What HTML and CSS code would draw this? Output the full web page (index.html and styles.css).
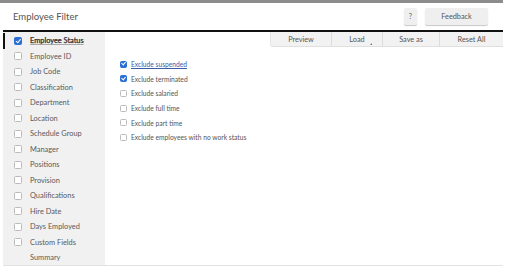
FILE: index.html
```html
<!DOCTYPE html>
<html>
<head>
<meta charset="utf-8">
<link rel="stylesheet" href="styles.css">
</head>
<body>
<div class="page">
  <div class="topbar"></div>
  <div class="header">
    <div class="title">Employee Filter</div>
    <div class="hbtns">
      <div class="btn help">?</div>
      <div class="btn feedback">Feedback</div>
    </div>
  </div>
  <div class="main">
    <div class="sidebar">
      <div class="item active"><span class="cb checked"></span><span class="label">Employee Status</span></div>
      <div class="item"><span class="cb"></span><span class="label">Employee ID</span></div>
      <div class="item"><span class="cb"></span><span class="label">Job Code</span></div>
      <div class="item"><span class="cb"></span><span class="label">Classification</span></div>
      <div class="item"><span class="cb"></span><span class="label">Department</span></div>
      <div class="item"><span class="cb"></span><span class="label">Location</span></div>
      <div class="item"><span class="cb"></span><span class="label">Schedule Group</span></div>
      <div class="item"><span class="cb"></span><span class="label">Manager</span></div>
      <div class="item"><span class="cb"></span><span class="label">Positions</span></div>
      <div class="item"><span class="cb"></span><span class="label">Provision</span></div>
      <div class="item"><span class="cb"></span><span class="label">Qualifications</span></div>
      <div class="item"><span class="cb"></span><span class="label">Hire Date</span></div>
      <div class="item"><span class="cb"></span><span class="label">Days Employed</span></div>
      <div class="item"><span class="cb"></span><span class="label">Custom Fields</span></div>
      <div class="item"><span class="cb hidden"></span><span class="label">Summary</span></div>
    </div>
    <div class="content">
      <div class="toolbar">
        <div class="tb t1">Preview</div>
        <div class="tb t2">Load<span class="caret"></span></div>
        <div class="tb t3">Save as</div>
        <div class="tb t4">Reset All</div>
      </div>
      <div class="options">
        <div class="opt"><span class="cb small checked"></span><span class="link">Exclude suspended</span></div>
        <div class="opt"><span class="cb small checked"></span><span>Exclude terminated</span></div>
        <div class="opt"><span class="cb small"></span><span>Exclude salaried</span></div>
        <div class="opt"><span class="cb small"></span><span>Exclude full time</span></div>
        <div class="opt"><span class="cb small"></span><span>Exclude part time</span></div>
        <div class="opt"><span class="cb small"></span><span>Exclude employees with no work status</span></div>
      </div>
    </div>
  </div>
</div>
</body>
</html>
```
FILE: styles.css
```css
html, body {
  margin: 0;
  padding: 0;
  background: #ffffff;
}
body {
  font-family: Lato, "Open Sans", sans-serif;
  color: #555;
}
.page {
  width: 503px;
}
.topbar {
  height: 3px;
  background: #8c8c8c;
}
.header {
  height: 27px;
  display: flex;
  align-items: center;
  justify-content: space-between;
  padding-left: 13px;
  padding-right: 15px;
  box-sizing: border-box;
}
.title {
  font-size: 9.5px;
  color: #555;
}
.hbtns {
  display: flex;
  gap: 8px;
  align-items: center;
}
.btn {
  height: 17px;
  background: #efefef;
  border-radius: 2px;
  box-shadow: 0 1px 1px #c8c8c8;
  font-size: 7.3px;
  color: #555;
  display: flex;
  align-items: center;
  justify-content: center;
}
.help {
  width: 13px;
}
.feedback {
  width: 63px;
}
.main {
  margin-left: 3px;
  border-top: 2px solid #111;
  display: flex;
  height: 233px;
  border-bottom: 1px solid #e2e2e2;
}
.sidebar {
  width: 102px;
  background: #f1f1f1;
  padding-top: 1px;
  box-sizing: border-box;
}
.item {
  height: 15.5px;
  display: flex;
  align-items: center;
  font-size: 7.4px;
  color: #5a5a5a;
  border-left: 2px solid transparent;
  padding-left: 9px;
}
.item.active {
  border-left-color: #111;
  color: #222;
}
.item.active .label {
  text-decoration: underline;
  text-decoration-color: #aaa;
  -webkit-text-stroke: 0.25px #333;
}
.cb {
  width: 6px;
  height: 6px;
  border: 1px solid #bbb;
  border-radius: 1.5px;
  background: #fff;
  margin-right: 8px;
  flex: none;
  position: relative;
}
.cb.hidden {
  visibility: hidden;
}
.cb.checked {
  background: #2b6fd6;
  border-color: #2b6fd6;
}
.cb.checked::after {
  content: "";
  position: absolute;
  left: 1.5px;
  top: 0px;
  width: 2px;
  height: 3.5px;
  border-right: 1.2px solid #fff;
  border-bottom: 1.2px solid #fff;
  transform: rotate(40deg);
}
.cb.small {
  width: 5px;
  height: 5px;
  margin-right: 4px;
}
.cb.small.checked::after {
  left: 1px;
  top: -0.5px;
  height: 3px;
}
.content {
  flex: 1;
  display: flex;
  flex-direction: column;
}
.toolbar {
  align-self: flex-end;
  display: flex;
  height: 15px;
  background: #f2f2f2;
  border-bottom: 1px solid #e0e0e0;
  border-left: 1px solid #e6e6e6;
  border-bottom-left-radius: 3px;
  box-sizing: border-box;
}
.tb {
  font-size: 7.3px;
  color: #555;
  display: flex;
  align-items: center;
  justify-content: center;
  border-left: 1px solid #dcdcdc;
  position: relative;
}
.tb.t1 { width: 60px; border-left: none; }
.tb.t2 { width: 50px; }
.tb.t3 { width: 56px; }
.tb.t4 { width: 63px; }
.caret {
  position: absolute;
  right: 10px;
  bottom: 1px;
  width: 0;
  height: 0;
  border-left: 2px solid transparent;
  border-bottom: 2px solid #777;
}
.options {
  padding-left: 15px;
  padding-top: 10px;
}
.opt {
  height: 14.6px;
  display: flex;
  align-items: center;
  font-size: 6.7px;
  color: #555;
}
.link {
  color: #3b5ca8;
  text-decoration: underline;
}
```
